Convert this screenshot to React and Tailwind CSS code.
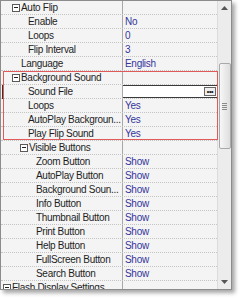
import React from 'react'

const rows = [
  { t: 'Auto Flip', cat: true, x: 12 },
  { t: 'Enable', v: 'No', x: 28 },
  { t: 'Loops', v: '0', x: 28 },
  { t: 'Flip Interval', v: '3', x: 28 },
  { t: 'Language', v: 'English', x: 21 },
  { t: 'Background Sound', cat: true, x: 12 },
  { t: 'Sound File', edit: true, x: 28 },
  { t: 'Loops', v: 'Yes', x: 28 },
  { t: 'AutoPlay Backgroun...', v: 'Yes', x: 28 },
  { t: 'Play Flip Sound', v: 'Yes', x: 28 },
  { t: 'Visible Buttons', cat: true, x: 20 },
  { t: 'Zoom Button', v: 'Show', x: 36 },
  { t: 'AutoPlay Button', v: 'Show', x: 36 },
  { t: 'Background Soun...', v: 'Show', x: 36 },
  { t: 'Info Button', v: 'Show', x: 36 },
  { t: 'Thumbnail Button', v: 'Show', x: 36 },
  { t: 'Print Button', v: 'Show', x: 36 },
  { t: 'Help Button', v: 'Show', x: 36 },
  { t: 'FullScreen Button', v: 'Show', x: 36 },
  { t: 'Search Button', v: 'Show', x: 36 },
  { t: 'Flash Display Settings', cat: true, x: 3 },
]

function Minus(){
  return (
    <span className="w-[8px] h-[8px] border border-[#5a5a5a] bg-white flex items-center justify-center mr-[1px] shrink-0">
      <span className="w-[4px] h-px bg-[#222]" />
    </span>
  )
}

function Row({ r }){
  return (
    <div className="h-[14px] flex border-b border-dotted border-[#c4c4c4] relative">
      {r.edit && <div className="absolute left-[1px] top-0 w-[1px] h-[14px] bg-[#333]" />}
      <div className="w-[121px] shrink-0 flex items-center overflow-hidden whitespace-nowrap" style={{ paddingLeft: r.x - 1 }}>
        {r.cat && <Minus />}
        <span className="text-[#1e1e1e]">{r.t}</span>
      </div>
      <div className="w-px bg-[#a8a8a8] shrink-0" />
      {r.edit ? (
        <div className="flex-1 flex items-center bg-white border-t border-b border-[#3a3a3a]">
          <span className="flex-1" />
          <span className="w-[12px] h-[9px] border border-[#666] bg-[#eee] flex items-center justify-center text-[7px] leading-none font-bold text-[#111] mr-[1px]">•••</span>
        </div>
      ) : (
        <div className="flex-1 flex items-center pl-[2px] text-[#34349c]">{r.v}</div>
      )}
    </div>
  )
}

function Arrow({ up }){
  return (
    <svg width="7" height="4" viewBox="0 0 7 4">
      <path d={up ? 'M0 4 L3.5 0 L7 4 Z' : 'M0 0 L3.5 4 L7 0 Z'} fill="#555" />
    </svg>
  )
}

export default function App(){
  const before = rows.slice(0, 5)
  const group = rows.slice(5, 10)
  const after = rows.slice(10)
  return (
    <div className="w-[241px] h-[300px] bg-white" style={{ fontFamily: '"Liberation Sans", Arial, sans-serif' }}>
      <div className="w-[232px] h-[290px] border border-[#8c8c8c] bg-[#f4f4f4] flex overflow-hidden shadow-[3px_3px_4px_rgba(0,0,0,0.35)] text-[10px] leading-[14px] tracking-[-0.3px]">
        <div className="w-[216px] shrink-0">
          {before.map((r, i) => <Row key={i} r={r} />)}
          <div className="relative">
            {group.map((r, i) => <Row key={i} r={r} />)}
            <div className="absolute z-10 left-[2px] right-[-1px] top-0 bottom-[1px] border border-[#e05a5a] pointer-events-none" />
          </div>
          {after.map((r, i) => <Row key={i} r={r} />)}
        </div>
        <div className="w-[14px] shrink-0 bg-[#ececec] border-l border-[#dcdcdc] flex flex-col items-center">
          <div className="h-[14px] flex items-center justify-center"><Arrow up /></div>
          <div className="h-[48px]" />
          <div className="w-[12px] h-[86px] border border-[#a9a9a9] rounded-[2px] bg-gradient-to-r from-[#f7f7f7] to-[#dedede] flex flex-col items-center justify-center gap-[1px]">
            <span className="w-[5px] h-px bg-[#8a8a8a]" />
            <span className="w-[5px] h-px bg-[#8a8a8a]" />
            <span className="w-[5px] h-px bg-[#8a8a8a]" />
            <span className="w-[5px] h-px bg-[#8a8a8a]" />
          </div>
          <div className="flex-1" />
          <div className="h-[14px] flex items-center justify-center"><Arrow /></div>
        </div>
      </div>
    </div>
  )
}
